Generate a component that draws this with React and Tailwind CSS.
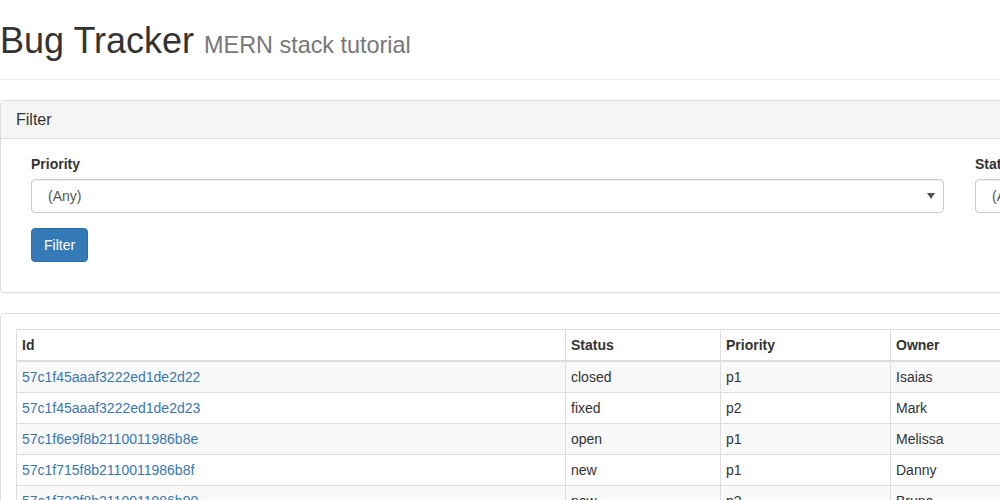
import React from 'react';

const bugs = [
  { id: '57c1f45aaaf3222ed1de2d22', status: 'closed', priority: 'p1', owner: 'Isaias' },
  { id: '57c1f45aaaf3222ed1de2d23', status: 'fixed', priority: 'p2', owner: 'Mark' },
  { id: '57c1f6e9f8b2110011986b8e', status: 'open', priority: 'p1', owner: 'Melissa' },
  { id: '57c1f715f8b2110011986b8f', status: 'new', priority: 'p1', owner: 'Danny' },
  { id: '57c1f722f8b2110011986b90', status: 'new', priority: 'p2', owner: 'Bruno' },
];

function SelectBox({ width }) {
  return (
    <div className={`${width} h-[34px] border border-[#ccc] rounded-[4px] bg-white flex items-center justify-between pl-[16px] pr-[8px] shadow-[inset_0_1px_1px_rgba(0,0,0,0.075)]`}>
      <span className="text-[14px] text-[#555]">(Any)</span>
      <svg width="8" height="6" viewBox="0 0 8 6">
        <polygon points="0,0 8,0 4,6" fill="#555" />
      </svg>
    </div>
  );
}

export default function App() {
  return (
    <div className="w-[1000px] h-[500px] overflow-hidden bg-white">
      <div className="w-[1400px] font-['Liberation_Sans',Arial,sans-serif] text-[14px] leading-[20px] text-[#333]">
        {/* Page header */}
        <div className="pb-[9px] pt-[21px] mb-[20px] border-b border-[#eee]">
          <h1 className="text-[36px] leading-[39px] h-[39px] mb-[10px] font-normal whitespace-nowrap">
            Bug Tracker <small className="text-[23.4px] leading-none text-[#777] font-normal">MERN stack tutorial</small>
          </h1>
        </div>

        {/* Filter panel */}
        <div className="border border-[#ddd] rounded-[4px] mb-[20px] shadow-[0_1px_1px_rgba(0,0,0,0.05)]">
          <div className="bg-[#f5f5f5] border-b border-[#ddd] px-[15px] py-[10px] rounded-t-[3px]">
            <h3 className="text-[16px] leading-[17px] font-normal">Filter</h3>
          </div>
          <div className="pt-[15px] pb-[30px] pl-[30px]">
            <div className="flex gap-[31px]">
              <div className="flex flex-col">
                <label className="font-bold mb-[5px]">Priority</label>
                <SelectBox width="w-[913px]" />
              </div>
              <div className="flex flex-col">
                <label className="font-bold mb-[5px]">Status</label>
                <SelectBox width="w-[300px]" />
              </div>
            </div>
            <button className="mt-[15px] h-[34px] px-[12px] bg-[#337ab7] border border-[#2e6da4] rounded-[4px] text-white text-[14px]">
              Filter
            </button>
          </div>
        </div>

        {/* Bug table panel */}
        <div className="border border-[#ddd] rounded-[4px] p-[15px] shadow-[0_1px_1px_rgba(0,0,0,0.05)]">
          <table className="table-fixed border-collapse border border-[#ddd] w-[1300px]">
            <colgroup>
              <col className="w-[549px]" />
              <col className="w-[155px]" />
              <col className="w-[170px]" />
              <col className="w-[426px]" />
            </colgroup>
            <thead>
              <tr>
                <th className="text-left font-bold p-[5px] border border-[#ddd] border-b-2">Id</th>
                <th className="text-left font-bold p-[5px] border border-[#ddd] border-b-2">Status</th>
                <th className="text-left font-bold p-[5px] border border-[#ddd] border-b-2">Priority</th>
                <th className="text-left font-bold p-[5px] border border-[#ddd] border-b-2">Owner</th>
              </tr>
            </thead>
            <tbody>
              {bugs.map((b, i) => (
                <tr key={b.id} className={i % 2 === 0 ? 'bg-[#f9f9f9]' : 'bg-white'}>
                  <td className="p-[5px] border border-[#ddd]">
                    <a href="#" className="text-[#3a77ad]">{b.id}</a>
                  </td>
                  <td className="p-[5px] border border-[#ddd]">{b.status}</td>
                  <td className="p-[5px] border border-[#ddd]">{b.priority}</td>
                  <td className="p-[5px] border border-[#ddd]">{b.owner}</td>
                </tr>
              ))}
            </tbody>
          </table>
        </div>
      </div>
    </div>
  );
}
